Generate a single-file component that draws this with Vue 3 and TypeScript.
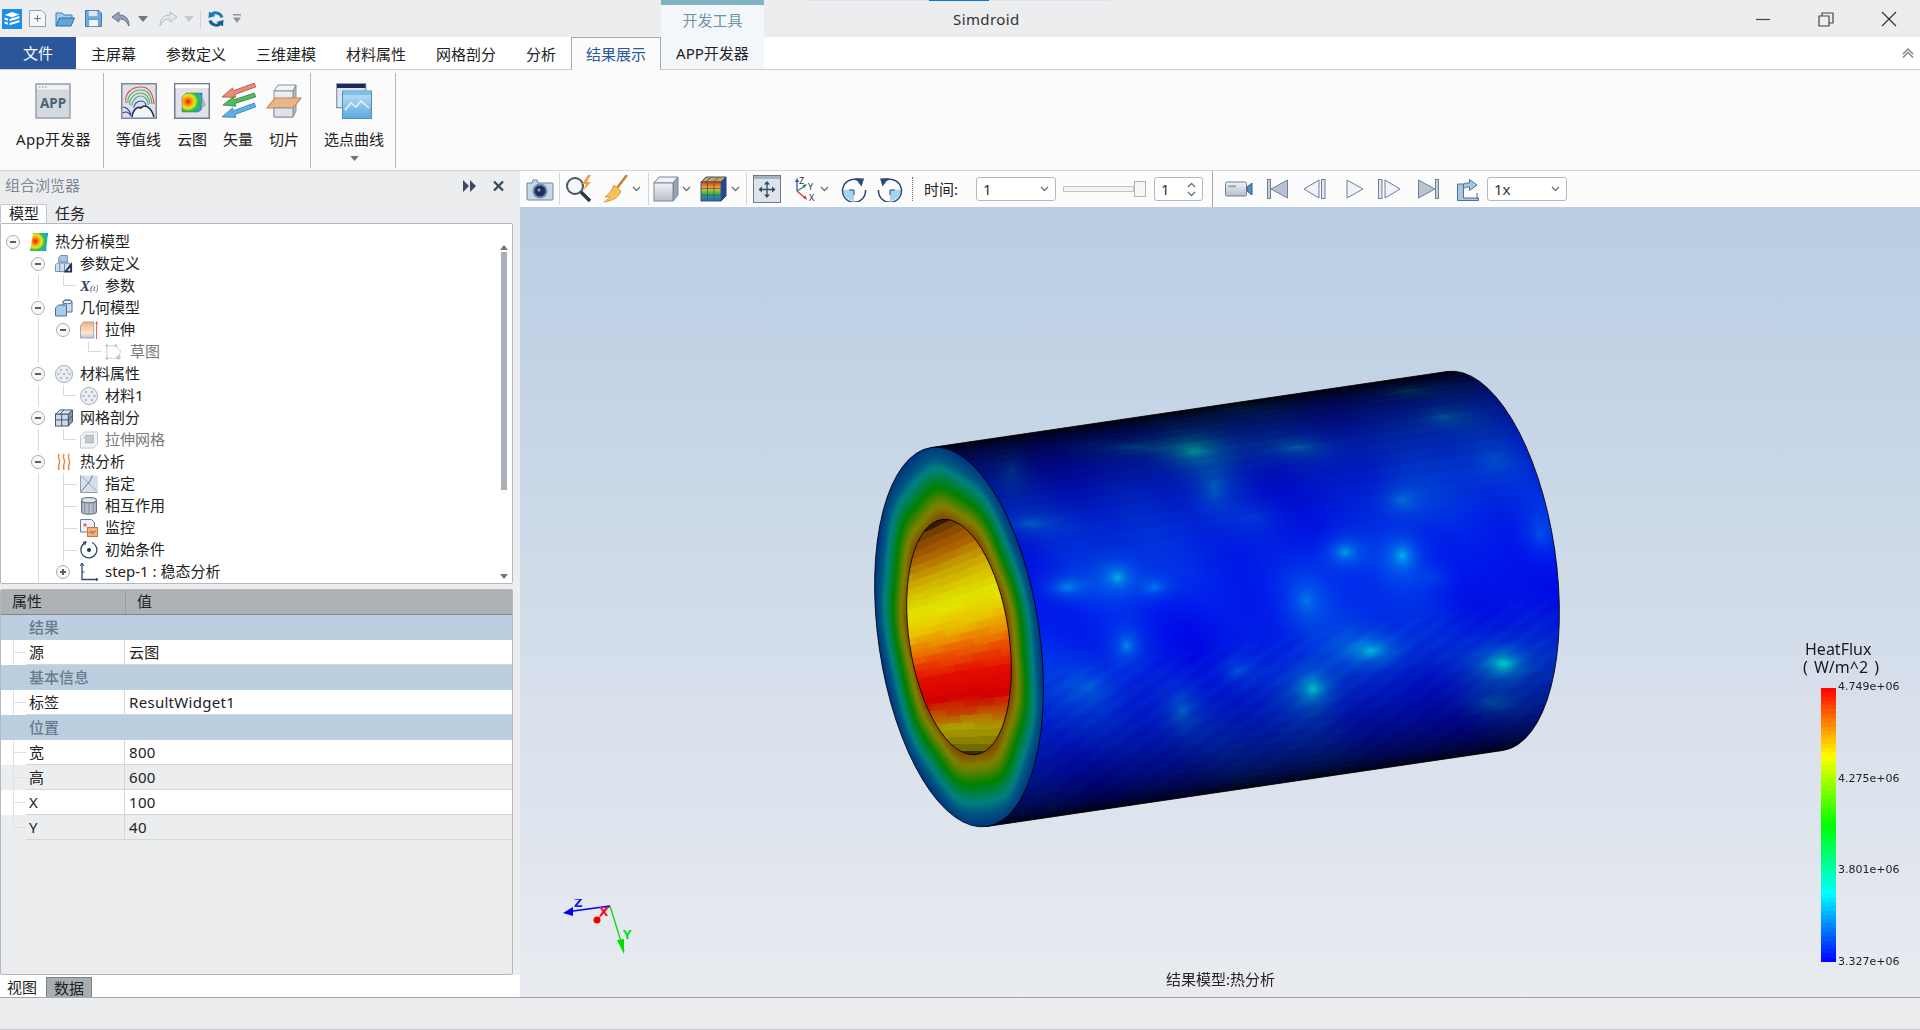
<script setup lang="ts">
import { onMounted, ref } from "vue";

type Rgb = [number, number, number];

interface TreeRow {
  label: string;
  icon: string;
  level: number;
  expander?: "minus" | "plus";
  /** vertical guide of the parent branch */
  guide?: boolean;
  /** connector to this row: elbow for the last child, tee for the others */
  joint?: "elbow" | "tee";
  muted?: boolean;
}

interface PropRow {
  label: string;
  value?: string;
  group?: boolean;
  alt?: boolean;
  last?: boolean;
}

const tabs = ["主屏幕", "参数定义", "三维建模", "材料属性", "网格剖分", "分析"];

const ribbonMiddle = [
  { label: "等值线", icon: "r-contour" },
  { label: "云图", icon: "r-cloud" },
  { label: "矢量", icon: "r-vector" },
  { label: "切片", icon: "r-slice" },
];

const treeRows: TreeRow[] = [
  { label: "热分析模型", icon: "t-heatmap", level: 0, expander: "minus" },
  { label: "参数定义", icon: "t-params", level: 1, expander: "minus" },
  { label: "参数", icon: "t-xt", level: 2, guide: true, joint: "elbow" },
  { label: "几何模型", icon: "t-solids", level: 1, expander: "minus" },
  { label: "拉伸", icon: "t-extrude", level: 2, expander: "minus", guide: true },
  { label: "草图", icon: "t-sketch", level: 3, guide: true, joint: "elbow", muted: true },
  { label: "材料属性", icon: "t-material", level: 1, expander: "minus" },
  { label: "材料1", icon: "t-material", level: 2, guide: true, joint: "elbow" },
  { label: "网格剖分", icon: "t-mesh", level: 1, expander: "minus" },
  { label: "拉伸网格", icon: "t-meshgrey", level: 2, guide: true, joint: "elbow", muted: true },
  { label: "热分析", icon: "t-heat", level: 1, expander: "minus" },
  { label: "指定", icon: "t-assign", level: 2, guide: true, joint: "tee" },
  { label: "相互作用", icon: "t-cyl", level: 2, guide: true, joint: "tee" },
  { label: "监控", icon: "t-monitor", level: 2, guide: true, joint: "tee" },
  { label: "初始条件", icon: "t-init", level: 2, guide: true, joint: "tee" },
  { label: "step-1 : 稳态分析", icon: "t-step", level: 2, expander: "plus", guide: true },
];

const propRows: PropRow[] = [
  { label: "结果", group: true },
  { label: "源", value: "云图" },
  { label: "基本信息", group: true },
  { label: "标签", value: "ResultWidget1" },
  { label: "位置", group: true },
  { label: "宽", value: "800" },
  { label: "高", value: "600", alt: true },
  { label: "X", value: "100" },
  { label: "Y", value: "40", alt: true, last: true },
];

const legendTicks = ["4.749e+06", "4.275e+06", "3.801e+06", "3.327e+06"];

function jet(value: number): Rgb {
  const v = Math.min(1, Math.max(0, value));
  if (v < 0.25) return [0, (255 * v) / 0.25, 255];
  if (v < 0.5) return [0, 255, 255 * (1 - (v - 0.25) / 0.25)];
  if (v < 0.75) return [(255 * (v - 0.5)) / 0.25, 255, 0];
  return [255, 255 * (1 - (v - 0.75) / 0.25), 0];
}

const legendBands = Array.from({ length: 64 }, (_, i) => {
  const [r, g, b] = jet(1 - (i + 0.5) / 64);
  return `rgb(${Math.round(r)},${Math.round(g)},${Math.round(b)})`;
});

// result field of the tube, all in page pixels
const scene = ref<HTMLCanvasElement | null>(null);
const OX = 520;
const OY = 207;
const CX = 959;
const CY = 637;
const AX = 516;
const AY = -76;
const AL = Math.hypot(AX, AY);
const UX = AX / AL;
const UY = AY / AL;
const PX = -UY;
const PY = UX;
const RAD = 191.5;
const MIN = 80.5;
const HOLE = 0.62;

// x, y in zoomed reference units, amplitude, spread
const blobs: number[][] = [
  [1400, 910, 0.2, 34, 32], [985, 985, 0.17, 30, 40], [1110, 870, 0.13, 44, 30],
  [1055, 575, 0.11, 26, 28], [1180, 585, 0.12, 24, 36], [560, 650, 0.11, 24, 30],
  [450, 680, 0.09, 32, 24], [640, 680, 0.07, 24, 22], [580, 855, 0.09, 20, 34],
  [725, 270, 0.15, 42, 30], [700, 1050, 0.07, 26, 50], [820, 930, 0.06, 34, 36],
  [1180, 420, 0.07, 36, 36], [370, 490, 0.06, 46, 22], [770, 380, 0.07, 30, 54],
  [1270, 170, 0.08, 50, 28], [950, 260, 0.08, 56, 22], [1190, 90, 0.11, 44, 14],
  [600, 260, 0.08, 70, 14], [1380, 1030, 0.07, 44, 24], [970, 720, 0.06, 30, 56],
  [1480, 520, 0.05, 30, 56], [800, 140, 0.08, 50, 12], [330, 330, 0.05, 24, 54],
  [1250, 650, 0.03, 40, 36], [860, 470, 0.03, 80, 50], [1380, 300, 0.04, 60, 60],
  [500, 980, 0.05, 50, 50],
].map(([x, y, a, sx, sy]) => [860 + x / 2.178, 360 + y / 3, a * 1.3, (sx / 2.178) * 1.7, (sy / 3) * 1.7]);

function bodyColor(x: number, y: number): Rgb {
  const dx = x - CX;
  const dy = y - CY;
  const w = Math.max(-1, Math.min(1, (dx * PX + dy * PY) / RAD));
  const facet = Math.round(Math.asin(w) / (Math.PI / 40)) * (Math.PI / 40);
  const shade = 0.92 * Math.pow(Math.max(0.02, Math.cos(facet)), 1.1);
  let v = 0.03;
  v += 0.01 * (Math.sin(x * 0.023 + y * 0.013) + Math.sin(y * 0.037 - x * 0.011));
  v += 0.006 * Math.sin(x * 0.061 - y * 0.047);
  if (w > 0.25) v += 0.005 * Math.sin((x + y * 1.4) * 0.24);
  for (const [bx, by, a, sx, sy] of blobs) {
    const ex = (x - bx) / sx;
    const ey = (y - by) / sy;
    const d = ex * ex + ey * ey;
    if (d < 16) v += a * Math.exp(-1.6 * Math.sqrt(d));
  }
  const [r, g, b] = jet(Math.min(v, 0.24));
  return [r * shade, g * shade, b * shade];
}

function ramp(x: number, stops: number[][]): number {
  for (let i = 1; i < stops.length; i++) {
    if (x <= stops[i][0]) {
      const [x0, y0] = stops[i - 1];
      const [x1, y1] = stops[i];
      return y0 + ((y1 - y0) * (x - x0)) / (x1 - x0);
    }
  }
  return stops[stops.length - 1][1];
}

const faceRamp = [[0.6, 0.86], [0.62, 0.85], [0.7, 0.72], [0.78, 0.5], [0.87, 0.27], [0.93, 0.17], [1.05, 0.06]];
const holeRamp = [
  [-1.3, 0.88], [-0.77, 0.86], [-0.6, 0.8], [-0.3, 0.745], [-0.1, 0.8], [0.1, 0.9],
  [0.3, 0.985], [0.5, 1], [0.62, 0.92], [0.76, 0.77], [1.3, 0.76],
];

function faceColor(x: number, y: number): Rgb {
  const dx = x - CX;
  const dy = y - CY;
  const lx = (dx * UX + dy * UY) / MIN;
  const ly = (dx * PX + dy * PY) / RAD;
  const rho = Math.hypot(lx, ly) + 0.01 * Math.sin(9 * Math.atan2(ly, lx));
  const [r, g, b] = jet(ramp(rho, faceRamp));
  return [r * 0.5, g * 0.5, b * 0.5];
}

function holeColor(x: number, y: number): Rgb {
  const dx = x - CX;
  const dy = y - CY;
  const t = (dx * UX + dy * UY) / (MIN * HOLE);
  const w = (dx * PX + dy * PY) / (RAD * HOLE);
  const skew = w + (0.035 - 0.1 * w) * t;
  const band = Math.round(skew * 16) / 16;
  const soft = 0.5 * skew + 0.5 * band;
  const tri = Math.sin(t * 5 + band * 29) > 0 ? 0.01 : -0.01;
  const v = ramp(soft + tri, holeRamp);
  const shade = 0.2 + 0.72 * Math.sqrt(Math.max(0, 1 - band * band));
  const [r, g, b] = jet(v);
  return [r * shade, g * shade, b * shade];
}

function layer(width: number, height: number, color: (x: number, y: number) => Rgb) {
  const c = document.createElement("canvas");
  c.width = width;
  c.height = height;
  const ctx = c.getContext("2d")!;
  const img = ctx.createImageData(width, height);
  for (let y = 150; y < 640; y++) {
    for (let x = 340; x < 1060; x++) {
      const [r, g, b] = color(x + OX, y + OY);
      const i = (y * width + x) * 4;
      img.data[i] = r;
      img.data[i + 1] = g;
      img.data[i + 2] = b;
      img.data[i + 3] = 255;
    }
  }
  ctx.putImageData(img, 0, 0);
  return c;
}

onMounted(() => {
  const canvas = scene.value;
  if (!canvas) return;
  const ctx = canvas.getContext("2d")!;
  const { width, height } = canvas;
  const rot = Math.atan2(UY, UX);
  const cx = CX - OX;
  const cy = CY - OY;
  const bx = cx + AX;
  const by = cy + AY;

  const silhouette = () => {
    ctx.beginPath();
    ctx.moveTo(cx - RAD * PX, cy - RAD * PY);
    ctx.lineTo(bx - RAD * PX, by - RAD * PY);
    ctx.ellipse(bx, by, MIN, RAD, rot, -Math.PI / 2, Math.PI / 2);
    ctx.lineTo(cx + RAD * PX, cy + RAD * PY);
  };
  const ellipsePath = (k: number) => {
    ctx.beginPath();
    ctx.ellipse(cx, cy, MIN * k, RAD * k, rot, 0, Math.PI * 2);
  };
  const fill = (path: () => void, source: HTMLCanvasElement) => {
    ctx.save();
    path();
    ctx.clip();
    ctx.drawImage(source, 0, 0);
    ctx.restore();
  };

  fill(silhouette, layer(width, height, bodyColor));
  fill(() => ellipsePath(1), layer(width, height, faceColor));
  fill(() => ellipsePath(HOLE), layer(width, height, holeColor));

  ctx.strokeStyle = "rgba(0,0,0,0.85)";
  ctx.lineWidth = 1;
  silhouette();
  ctx.stroke();
  ellipsePath(1);
  ctx.stroke();
  ellipsePath(HOLE);
  ctx.stroke();
});
</script>

<template>
  <div class="app">
    <!-- icon sprite -->
    <svg class="sprite" aria-hidden="true">
      <defs>
        <radialGradient id="heat" cx="0.3" cy="0.45" r="0.85">
          <stop offset="0" stop-color="#f01010" />
          <stop offset="0.25" stop-color="#f8a010" />
          <stop offset="0.42" stop-color="#e8e820" />
          <stop offset="0.6" stop-color="#28c040" />
          <stop offset="0.8" stop-color="#18b0e0" />
          <stop offset="1" stop-color="#1848d0" />
        </radialGradient>
        <linearGradient id="steel" x1="0" y1="0" x2="0" y2="1">
          <stop offset="0" stop-color="#f1f3f6" />
          <stop offset="1" stop-color="#b8bfca" />
        </linearGradient>
        <linearGradient id="sky" x1="0" y1="0" x2="0" y2="1">
          <stop offset="0" stop-color="#c5e0f4" />
          <stop offset="1" stop-color="#5aa9de" />
        </linearGradient>
        <linearGradient id="amber" x1="0" y1="0" x2="0" y2="1">
          <stop offset="0" stop-color="#f4b27a" />
          <stop offset="0.7" stop-color="#fbe6d3" />
          <stop offset="1" stop-color="#b9c3d2" />
        </linearGradient>
        <linearGradient id="rainbow" x1="0" y1="0" x2="0" y2="1">
          <stop offset="0" stop-color="#e83020" />
          <stop offset="0.35" stop-color="#f0c020" />
          <stop offset="0.65" stop-color="#30b050" />
          <stop offset="1" stop-color="#2060d8" />
        </linearGradient>
      </defs>

      <!-- quick access -->
      <symbol id="q-logo" viewBox="0 0 20 20">
        <rect width="20" height="20" fill="#1b8ee8" />
        <path d="M2.5 6 10 3l7.5 2.4L10 8.2z M2.5 8.4l3.4 1.2v2.2L2.5 10.6z M2.5 12.4l3.4 1.2v2.2L2.5 14.600z" fill="#fff" />
        <path d="M7.500 10 17.500 7v2.200L7.500 12.200z M7.500 14l10-3v2.200l-10 3z" fill="#fff" />
      </symbol>
      <symbol id="q-new" viewBox="0 0 18 18">
        <path d="M.5.5h13l4 4v13H.500z" fill="#f6f7f9" stroke="#8c99aa" />
        <path d="M9 5.500v7M5.500 9h7" stroke="#5c6b7d" fill="none" />
      </symbol>
      <symbol id="q-open" viewBox="0 0 20 16">
        <path d="M1 15V2h6l2 2h8v3" fill="#a8c9e6" stroke="#3d7fb5" />
        <path d="M1 15l3.500-8H19.500L16 15z" fill="#5fa8dc" stroke="#2c6fa5" />
      </symbol>
      <symbol id="q-save" viewBox="0 0 18 18">
        <path d="M.5.5h14l3 3v14H.500z" fill="#6fa8dc" stroke="#3f74a6" />
        <rect x="4" y="1" width="9" height="5.500" fill="#dce9f4" />
        <rect x="3.500" y="10" width="11" height="7.500" fill="#eef3f8" stroke="#3f74a6" stroke-width="0.600" />
      </symbol>
      <symbol id="q-undo" viewBox="0 0 20 16">
        <path d="M8 1 1 6l7 5V8c4 0 7 1 10 7 0-7-3-11-10-11z" fill="#93a2b5" stroke="#63738a" />
      </symbol>
      <symbol id="q-redo" viewBox="0 0 20 16">
        <path d="M12 1l7 5-7 5V8C8 8 5 9 2 15c0-7 3-11 10-11z" fill="#e3e6ea" stroke="#b4bcc6" />
      </symbol>
      <symbol id="tri" viewBox="0 0 10 6"><path d="M0 0h10L5 6z" fill="currentColor" /></symbol>
      <symbol id="q-refresh" viewBox="0 0 16 18">
        <path d="M14 7.500A6.500 6.500 0 0 0 3.500 4.500" fill="none" stroke="#1d78b8" stroke-width="3" />
        <path d="M2 10.500A6.500 6.500 0 0 0 12.500 13.500" fill="none" stroke="#155f94" stroke-width="3" />
        <path d="M.5 8 1 1.500 7.500 6z" fill="#1d78b8" />
        <path d="M15.500 10 15 16.500 8.500 12z" fill="#155f94" />
      </symbol>
      <symbol id="q-custom" viewBox="0 0 8 9">
        <path d="M0 0h8v1.500H0z M0 3.500h8L4 9z" fill="#8f959d" />
      </symbol>

      <!-- ribbon -->
      <symbol id="r-app" viewBox="0 0 36 36">
        <rect x="1" y="1" width="34" height="34" fill="#d4d8df" stroke="#9aa1ab" stroke-width="1.500" />
        <rect x="2" y="2" width="32" height="4.500" fill="#eff1f4" />
        <path d="M4 4h1.500M7 4h1.500M10 4h1.500" stroke="#7f8894" />
        <text x="18" y="25" font-size="13.500" font-weight="700" fill="#4c6279" text-anchor="middle" font-family="Noto Sans, sans-serif">APP</text>
      </symbol>
      <symbol id="r-contour" viewBox="0 0 36 36">
        <rect x=".75" y=".75" width="34.500" height="34.500" fill="#dde1e7" stroke="#7d8898" stroke-width="1.500" />
        <g fill="none" stroke-width="1.100">
          <path d="M5 20C3 10 11 4 20 4c8 0 12 6 13 17" stroke="#d8504e" />
          <path d="M7 20C6 13 12 7 20 7c6 0 10 5 11 14M9 22c-1-6 4-12 11-12 6 0 8 5 9 11" stroke="#58ab62" />
          <path d="M11 23c0-5 4-10 9-10 4 0 7 4 7 9" stroke="#4bb07a" />
          <path d="M13 25c0-4 3-7 7-7s5 3 5 6" stroke="#3a4fc0" />
          <path d="M2 24c3 0 6 3 8 7M2 30c3-2 6-1 8 3" stroke="#2b38b0" />
        </g>
        <path d="M11 34c1-8 6-11 9-9 3-4 10-2 13 9" fill="#f3f4f6" stroke="#1d2a4c" stroke-width="1.600" />
      </symbol>
      <symbol id="r-cloud" viewBox="0 0 36 36">
        <rect x=".75" y=".75" width="34.500" height="34.500" fill="#dfe3e9" stroke="#6f7c90" stroke-width="1.500" />
        <rect x="1.500" y="1.500" width="33" height="3.500" fill="#fff" />
        <path d="M25 28l7-6-4-10z" fill="#aeb4be" />
        <path d="M8 14 12 10h16l-1 17-3 2H8z" fill="url(#heat)" stroke="#7a5a20" stroke-width="0.500" />
      </symbol>
      <symbol id="r-vector" viewBox="0 0 36 36">
        <path d="M2 14 12.500 4.900l1 2.800L34.300.1l1.400 3.800-20.800 7.600 1 2.800z" fill="#f08a78" stroke="#8a4a3c" stroke-width="0.700" />
        <path d="M3 22 13 13.900l1 2.800 20.300-6.600 1.400 3.800-20.800 6.600 1 2.800z" fill="#4fbf5e" stroke="#2a6a34" stroke-width="0.700" />
        <path d="M2 34 12.500 24.900l1 2.800 20.800-7.600 1.400 3.800-20.800 7.600 1 2.800z" fill="#5cb2ea" stroke="#2a6a9c" stroke-width="0.700" />
      </symbol>
      <symbol id="r-slice" viewBox="0 0 36 36">
        <path d="M8 8l4-6h18l-3 6z" fill="#f3f4f6" stroke="#8a92a0" />
        <path d="M27 8l3-6v26l-3 6z" fill="#b4bbc6" stroke="#8a92a0" />
        <rect x="8" y="8" width="19" height="26" fill="url(#steel)" stroke="#8a92a0" />
        <path d="M1 25 9 15h26l-8 10z" fill="#eab58a" stroke="#c98552" stroke-width="1.200" />
        <path d="M8 25h19v9H8z" fill="#dfe2e8" stroke="#8a92a0" />
      </symbol>
      <symbol id="r-curve" viewBox="0 0 36 36">
        <rect x=".75" y=".75" width="29" height="24" fill="#dce6f0" stroke="#6f8096" />
        <rect x="1" y="1" width="28.500" height="4" fill="#1e2a55" />
        <rect x="6.500" y="8" width="29" height="27.500" fill="url(#sky)" stroke="#4a90c6" />
        <rect x="7" y="8.500" width="28" height="3.500" fill="#7cc0ea" />
        <path d="M9 27l6-7 5 4 5-6 8 7" fill="none" stroke="#e8f5fd" stroke-width="1.500" />
      </symbol>

      <!-- viewport toolbar -->
      <symbol id="v-camera" viewBox="0 0 28 24">
        <path d="M1 6h5l1-3h4l1 3h14a1 1 0 0 1 1 1v15a1 1 0 0 1-1 1H2a1 1 0 0 1-1-1z" fill="#c9d6e6" stroke="#6d83a0" />
        <circle cx="14" cy="14" r="7.500" fill="#6b8bb0" />
        <circle cx="14" cy="14" r="5.500" fill="#1e2f5c" />
        <circle cx="13" cy="13" r="1.500" fill="#8ea6cc" />
      </symbol>
      <symbol id="v-zoom" viewBox="0 0 29 28">
        <circle cx="10" cy="11" r="8" fill="#f4f7fa" stroke="#4b5560" stroke-width="2" />
        <path d="M16 17l9 9" stroke="#2e3640" stroke-width="3.500" />
        <path d="M23 0l-6 9h4l-3 7 8-9h-4l4-7z" fill="#f0a040" />
      </symbol>
      <symbol id="v-broom" viewBox="0 0 26 28">
        <path d="M25 0 15 13" stroke="#c48438" stroke-width="2.500" />
        <path d="M12 10l7 6c-2 6-8 10-17 11 4-3 6-5 6-6-2 1-3 1-5 1 4-3 7-7 9-12z" fill="#f3c257" stroke="#cc9330" stroke-width="0.800" />
      </symbol>
      <symbol id="chev" viewBox="0 0 9 6"><path d="M1 1l3.500 3.500L8 1" fill="none" stroke="#66717f" stroke-width="1.300" /></symbol>
      <symbol id="v-cube" viewBox="0 0 26 26">
        <path d="M1 7l5-6h19l-5 6z" fill="#f0f2f5" stroke="#7d8795" />
        <path d="M20 7l5-6v18l-5 6z" fill="#98a2b0" stroke="#7d8795" />
        <rect x="1" y="7" width="19" height="18" fill="url(#steel)" stroke="#7d8795" />
      </symbol>
      <symbol id="v-colorcube" viewBox="0 0 27 26">
        <path d="M1 6l5-5h20l-5 5z" fill="#cfa050" stroke="#38557c" />
        <path d="M21 6l5-5v19l-5 5z" fill="#1c4a8c" stroke="#24406c" />
        <rect x="1" y="6" width="20" height="19" fill="url(#rainbow)" stroke="#38557c" />
        <path d="M7.500 6v19M14 6v19M1 12.500h20M1 19h20M11 1l-5 5M18.500 1l-5 5M21 12l5-5M21 18.500l5-5" stroke="#38557c" stroke-width="0.800" fill="none" />
      </symbol>
      <symbol id="v-fit" viewBox="0 0 28 28">
        <rect x=".5" y=".5" width="27" height="27" fill="#dfe4ea" stroke="#6c7b90" />
        <rect x="1" y="1" width="26" height="3" fill="#a7b2c0" />
        <path d="M14 7v15M6.500 14.500h15" stroke="#2c4a6e" stroke-width="1.300" />
        <path d="M14 6l-3 3.500h6z M14 23l-3-3.500h6z M5.500 14.500 9 11.500v6z M22.500 14.500 19 11.500v6z" fill="#2c4a6e" />
      </symbol>
      <symbol id="v-axes" viewBox="0 0 24 26">
        <path d="M3 15V4" stroke="#2050c0" stroke-width="1.200" />
        <path d="M3 2 1 6h4z" fill="#2050c0" />
        <path d="M3 15l8-5" stroke="#209048" stroke-width="1.200" />
        <path d="M13 8l-4.500 1 2 3z" fill="#209048" />
        <path d="M3 15l8 7" stroke="#d83030" stroke-width="1.200" />
        <path d="M13 24l-1.500-4.500-2.500 2z" fill="#d83030" />
        <g font-size="9" fill="#333" font-family="Noto Sans, sans-serif">
          <text x="5" y="8">Z</text>
          <text x="14" y="14">Y</text>
          <text x="15" y="25">X</text>
        </g>
      </symbol>
      <symbol id="v-rotcw" viewBox="0 0 26 25">
        <path d="M13 12.500V24A11.500 11.500 0 0 1 2 13z" fill="#a6d3f0" />
        <path d="M19 4A11.500 11.500 0 1 0 24.500 13" fill="none" stroke="#2d4a70" stroke-width="1.500" />
        <path d="M14 1l9 .5-2.500 8z" fill="#2d4a70" />
        <path d="M13 13H8M13 13v5" stroke="#2d4a70" />
      </symbol>
      <symbol id="v-rotccw" viewBox="0 0 26 25">
        <path d="M13 12.500V24A11.500 11.500 0 0 0 24 13z" fill="#a6d3f0" />
        <path d="M7 4A11.500 11.500 0 1 1 1.500 13" fill="none" stroke="#2d4a70" stroke-width="1.500" />
        <path d="M12 1l-9 .5 2.500 8z" fill="#2d4a70" />
        <path d="M13 13h5M13 13v5" stroke="#2d4a70" />
      </symbol>
      <symbol id="v-video" viewBox="0 0 28 16">
        <rect x=".5" y="1" width="21" height="14" rx="1.500" fill="url(#steel)" stroke="#6d7f98" />
        <rect x="3" y="4" width="8" height="2.500" fill="#a5aebb" />
        <path d="M22 6l5-4v12l-5-4z" fill="#4f8fc4" stroke="#3a5f88" />
      </symbol>
      <symbol id="v-first" viewBox="0 0 21 20">
        <rect x=".5" y=".5" width="3" height="19" fill="#c4cfdc" stroke="#6d7f9c" />
        <path d="M20.500 1v18L4 10z" fill="#b9c3d0" stroke="#6d7f9c" />
      </symbol>
      <symbol id="v-prev" viewBox="0 0 23 20">
        <path d="M16 1v18L1 10z" fill="#eff2f6" stroke="#6d7f9c" />
        <rect x="18.500" y=".5" width="3.500" height="19" fill="#e3e8ee" stroke="#6d7f9c" />
      </symbol>
      <symbol id="v-play" viewBox="0 0 18 20">
        <path d="M1 1v18l16-9z" fill="#eff2f6" stroke="#6d7f9c" />
      </symbol>
      <symbol id="v-next" viewBox="0 0 23 20">
        <rect x=".5" y=".5" width="3.500" height="19" fill="#e3e8ee" stroke="#6d7f9c" />
        <path d="M7 1v18l15-9z" fill="#eff2f6" stroke="#6d7f9c" />
      </symbol>
      <symbol id="v-last" viewBox="0 0 21 20">
        <path d="M.5 1v18L17 10z" fill="#b9c3d0" stroke="#6d7f9c" />
        <rect x="17.500" y=".5" width="3" height="19" fill="#c4cfdc" stroke="#6d7f9c" />
      </symbol>
      <symbol id="v-export" viewBox="0 0 24 24">
        <path d="M1.500 7h6v14h15v2.500H1.500z" fill="#a9c7e4" stroke="#4f6f96" />
        <path d="M21 16v6M7.500 7c2-1 4-1 6-1V2.500L21 8l-7.500 5.500V10c-3 0-5 0-6 2z" fill="#a9c7e4" stroke="#4f6f96" />
      </symbol>

      <!-- tree -->
      <symbol id="t-heatmap" viewBox="0 0 18 18">
        <path d="M3 0h15l-2 18H0z" fill="url(#heat)" />
      </symbol>
      <symbol id="t-params" viewBox="0 0 19 18">
        <path d="M4 2l2-2h7v7H4z" fill="#a9c7e4" stroke="#4b6f96" stroke-width="0.800" />
        <path d="M.5 10l2-2h13v9H.500z" fill="#cfe0f0" stroke="#4b6f96" stroke-width="0.800" />
        <path d="M5 9v8M10 9v8" stroke="#4b6f96" stroke-width="0.800" />
        <path d="M18 7v11h-9z" fill="#1f3558" />
        <path d="M16 13v3h-3z" fill="#fff" />
      </symbol>
      <symbol id="t-xt" viewBox="0 0 19 18">
        <text x="0" y="14" font-family="Liberation Serif, serif" font-style="italic" font-size="16" font-weight="700" fill="#33455f">X</text>
        <text x="10.500" y="14" font-family="Liberation Serif, serif" font-style="italic" font-size="9.500" fill="#33455f">(t)</text>
      </symbol>
      <symbol id="t-solids" viewBox="0 0 18 18">
        <path d="M8 3c0-3 9-3 9 0v10h-9z" fill="#cfdff0" stroke="#4b6f96" />
        <ellipse cx="12.500" cy="3" rx="4.500" ry="1.800" fill="#e6f0f8" stroke="#4b6f96" />
        <path d="M.5 9l3-3h8v11H.500z" fill="#a9cbea" stroke="#4b6f96" />
      </symbol>
      <symbol id="t-extrude" viewBox="0 0 19 19">
        <path d="M.5 5l3-4h11v17H.500z" fill="url(#amber)" stroke="#8897ad" stroke-width="0.800" />
        <path d="M17.500 19V2" stroke="#e05050" />
        <path d="M17.500 0l-1.500 3h3z" fill="#e05050" />
      </symbol>
      <symbol id="t-sketch" viewBox="0 0 20 18">
        <path d="M2 2h10l5 6c0 2-1 6-3 8H2z" fill="none" stroke="#b8bcc2" stroke-dasharray="3 1" />
        <path d="M1 1h2v2H1z M11 1h2v2h-2z M1 15h2v2H1z" fill="#d0d3d8" stroke="#a6abb2" stroke-width="0.500" />
        <circle cx="15" cy="15" r="2.500" fill="#c3c7cc" />
      </symbol>
      <symbol id="t-material" viewBox="0 0 18 18">
        <circle cx="9" cy="9" r="8.500" fill="#eceff3" stroke="#a4adb9" />
        <g fill="#b4bdc9">
          <circle cx="6" cy="5" r="1.300" /><circle cx="12" cy="5" r="1.300" /><circle cx="3.500" cy="9" r="1.300" /><circle cx="9" cy="9" r="1.300" /><circle cx="14.500" cy="9" r="1.300" /><circle cx="6" cy="13" r="1.300" /><circle cx="12" cy="13" r="1.300" />
        </g>
      </symbol>
      <symbol id="t-mesh" viewBox="0 0 19 18">
        <path d="M.5 5 5 .5h13.500L14 5z" fill="#dfe4ea" stroke="#3f506a" />
        <path d="M14 5 18.500.5V13L14 17.500z" fill="#8695aa" stroke="#3f506a" />
        <rect x=".5" y="5" width="13.500" height="12.500" fill="#cfdbe8" stroke="#3f506a" />
        <path d="M7 5v12.500M.5 11h13.500M9.500.5 5 5M14 11l4.500-4.500" stroke="#3f506a" fill="none" />
      </symbol>
      <symbol id="t-meshgrey" viewBox="0 0 19 18">
        <path d="M.5 5 5 .5h13.500v12.500L14 17.500H.500z" fill="#f2f3f5" stroke="#bfc3c9" />
        <rect x="6" y="4" width="8" height="8" fill="#c6cad0" stroke="#a9aeb6" />
        <path d="M3 8l3-4" stroke="#c6cad0" />
      </symbol>
      <symbol id="t-heat" viewBox="0 0 16 18">
        <path d="M3 1c-2.500 4 2.500 6 0 10-.5 2-1 4 0 6M8 1c-2.500 4 2.500 6 0 10-.5 2-1 4 0 6M13 1c-2.500 4 2.500 6 0 10-.5 2-1 4 0 6" fill="none" stroke="#e88a40" stroke-width="1.500" />
      </symbol>
      <symbol id="t-assign" viewBox="0 0 19 18">
        <rect width="19" height="18" fill="#d9dfe7" />
        <path d="M.5 0v18h18" fill="none" stroke="#8896a8" />
        <path d="M2 1l15 15" stroke="#8fa0b6" />
        <path d="M1 17C5 12 12 6 13 0" fill="none" stroke="#2c78b8" />
      </symbol>
      <symbol id="t-cyl" viewBox="0 0 16 17">
        <path d="M1 3v11c0 3 14 3 14 0V3z" fill="#b4bdc8" stroke="#5d6c7e" />
        <ellipse cx="8" cy="3" rx="7" ry="2.500" fill="#dfe4ea" stroke="#5d6c7e" />
        <path d="M4 5v10M8 6v10M12 5v10" stroke="#6f7d8f" stroke-width="0.700" />
      </symbol>
      <symbol id="t-monitor" viewBox="0 0 18 18">
        <path d="M.5.5h11l3 3V13H.500z" fill="#eef1f5" stroke="#6f7f92" />
        <path d="M5 4v4M3 6h4" stroke="#d05040" />
        <rect x="7.500" y="8.500" width="10" height="9" fill="#f2b080" stroke="#c97840" />
        <path d="M9 14l2-2 1.500 3 1.500-3 2 1" fill="none" stroke="#8c4c20" stroke-width="0.700" />
      </symbol>
      <symbol id="t-init" viewBox="0 0 18 18">
        <path d="M12 1.500A8 8 0 1 1 4 2.500" fill="none" stroke="#2d4a70" stroke-width="1.300" />
        <path d="M7 0 2.500 1l2.500 3.500z" fill="#2d4a70" />
        <circle cx="9" cy="9" r="2" fill="#1f3558" />
      </symbol>
      <symbol id="t-step" viewBox="0 0 18 18">
        <path d="M2 0v16.500h16" fill="none" stroke="#2d4a70" stroke-width="1.300" />
        <path d="M0 3l2-3 2 3M16 15l2 1.500-2 1.500" fill="none" stroke="#2d4a70" />
        <path d="M1.500 9h3" stroke="#2d4a70" />
      </symbol>
    </svg>

    <!-- title bar -->
    <header class="titlebar">
      <div class="quick">
        <svg class="q q-20"><use href="#q-logo" /></svg>
        <svg class="q q-17"><use href="#q-new" /></svg>
        <svg class="q q-20"><use href="#q-open" /></svg>
        <svg class="q q-17"><use href="#q-save" /></svg>
        <svg class="q q-20"><use href="#q-undo" /></svg>
        <svg class="q q-tri"><use href="#tri" /></svg>
        <svg class="q q-20"><use href="#q-redo" /></svg>
        <svg class="q q-tri q-off"><use href="#tri" /></svg>
        <span class="q-sep"></span>
        <svg class="q q-16"><use href="#q-refresh" /></svg>
        <svg class="q q-8"><use href="#q-custom" /></svg>
      </div>
      <div class="context-tab">开发工具</div>
      <div class="title">Simdroid</div>
      <div class="title-strip"><i></i></div>
      <div class="win">
        <span class="win-btn">
          <svg viewBox="0 0 16 16"><path d="M1 8.500h14" stroke="#444" stroke-width="1.200" /></svg>
        </span>
        <span class="win-btn">
          <svg viewBox="0 0 16 16"><path d="M1 5h10v10H1z M4 5V2h11v10h-4" fill="none" stroke="#444" stroke-width="1.200" /></svg>
        </span>
        <span class="win-btn">
          <svg viewBox="0 0 16 16"><path d="M1 1l14 14M15 1 1 15" stroke="#333" stroke-width="1.200" /></svg>
        </span>
      </div>
    </header>

    <!-- ribbon tabs -->
    <nav class="tabs">
      <div class="tab-file">文件</div>
      <div v-for="t in tabs" :key="t" class="tab">{{ t }}</div>
      <div class="tab tab--active">结果展示</div>
      <div class="tab tab--context">APP开发器</div>
      <svg class="collapse" viewBox="0 0 12 10">
        <path d="M1 6l5-5 5 5M1 9.500l5-5 5 5" fill="none" stroke="#7a828c" stroke-width="1.400" />
      </svg>
    </nav>

    <!-- ribbon -->
    <section class="ribbon">
      <div class="group group--app">
        <div class="rbtn">
          <svg class="ricon"><use href="#r-app" /></svg>
          <span class="rbtn-wide">App开发器</span>
        </div>
      </div>
      <div class="group group--mid">
        <div v-for="b in ribbonMiddle" :key="b.label" class="rbtn">
          <svg class="ricon"><use :href="'#' + b.icon" /></svg>
          <span>{{ b.label }}</span>
        </div>
      </div>
      <div class="group group--curve">
        <div class="rbtn">
          <svg class="ricon"><use href="#r-curve" /></svg>
          <span>选点曲线</span>
          <svg class="rtri"><use href="#tri" /></svg>
        </div>
      </div>
    </section>

    <main class="main">
      <!-- left side -->
      <aside class="side">
        <div class="side-head">
          <span class="side-title">组合浏览器</span>
          <svg class="side-btn side-btn--float" viewBox="0 0 13 12"><path d="M0 0l6 6-6 6z M7 0l6 6-6 6z" fill="#3c4a5e" /></svg>
          <svg class="side-btn" viewBox="0 0 12 12"><path d="M1.500 1.500l9 9M10.500 1.500l-9 9" stroke="#3c4a5e" stroke-width="2.400" /></svg>
        </div>
        <div class="side-tabs">
          <span class="side-tab side-tab--on">模型</span>
          <span class="side-tab">任务</span>
        </div>

        <div class="tree-box">
          <div class="tree">
            <div
              v-for="r in treeRows"
              :key="r.label + r.level + r.icon"
              class="row"
              :class="[`lv-${r.level}`, { 'row--muted': r.muted }]"
            >
              <i v-if="r.guide" class="guide"></i>
              <i v-if="r.joint" class="joint" :class="`joint--${r.joint} joint-lv-${r.level}`"></i>
              <span class="exp" :class="{ 'exp--on': r.expander, 'exp--plus': r.expander === 'plus' }"></span>
              <svg class="ticon"><use :href="'#' + r.icon" /></svg>
              <span class="row-label">{{ r.label }}</span>
            </div>
          </div>
          <div class="vscroll">
            <svg class="vtri vtri--up"><use href="#tri" /></svg>
            <div class="vthumb"></div>
            <svg class="vtri vtri--down"><use href="#tri" /></svg>
          </div>
        </div>

        <div class="props">
          <div class="props-head">
            <span>属性</span>
            <span>值</span>
          </div>
          <div
            v-for="p in propRows"
            :key="p.label"
            class="prop"
            :class="{ 'prop--group': p.group, 'prop--alt': p.alt, 'prop--last': p.last }"
          >
            <template v-if="p.group">
              <span class="prop-group">{{ p.label }}</span>
            </template>
            <template v-else>
              <span class="prop-gutter"></span>
              <span class="prop-key">{{ p.label }}</span>
              <span class="prop-val">{{ p.value }}</span>
            </template>
          </div>
        </div>

        <div class="bottom-tabs">
          <span class="btab">视图</span>
          <span class="btab btab--on">数据</span>
        </div>
      </aside>

      <!-- 3D view -->
      <section class="view-col">
        <div class="toolbar">
          <svg class="ti ti-camera"><use href="#v-camera" /></svg>
          <span class="tsep"></span>
          <svg class="ti ti-zoom"><use href="#v-zoom" /></svg>
          <svg class="ti ti-broom"><use href="#v-broom" /></svg>
          <svg class="tchev"><use href="#chev" /></svg>
          <span class="tsep"></span>
          <svg class="ti ti-cube"><use href="#v-cube" /></svg>
          <svg class="tchev"><use href="#chev" /></svg>
          <svg class="ti ti-ccube"><use href="#v-colorcube" /></svg>
          <svg class="tchev"><use href="#chev" /></svg>
          <span class="tsep"></span>
          <svg class="ti ti-fit"><use href="#v-fit" /></svg>
          <svg class="ti ti-axes"><use href="#v-axes" /></svg>
          <svg class="tchev"><use href="#chev" /></svg>
          <svg class="ti ti-rot"><use href="#v-rotcw" /></svg>
          <svg class="ti ti-rot"><use href="#v-rotccw" /></svg>
          <span class="tdots"></span>
          <span class="tlabel">时间:</span>
          <div class="combo"><span>1</span><svg class="tchev"><use href="#chev" /></svg></div>
          <div class="slider"><span class="slider-track"></span><span class="slider-handle"></span></div>
          <div class="spin">
            <span>1</span>
            <span class="spin-arrows">
              <svg class="tchev tchev--up"><use href="#chev" /></svg>
              <svg class="tchev"><use href="#chev" /></svg>
            </span>
          </div>
          <span></span>
          <span class="tsep tsep--dark"></span>
          <svg class="ti ti-video"><use href="#v-video" /></svg>
          <svg class="ti ti-first"><use href="#v-first" /></svg>
          <svg class="ti ti-step"><use href="#v-prev" /></svg>
          <svg class="ti ti-play"><use href="#v-play" /></svg>
          <svg class="ti ti-step"><use href="#v-next" /></svg>
          <svg class="ti ti-first"><use href="#v-last" /></svg>
          <svg class="ti ti-export"><use href="#v-export" /></svg>
          <div class="combo"><span>1x</span><svg class="tchev"><use href="#chev" /></svg></div>
        </div>

        <div class="view">
          <canvas ref="scene" class="scene" width="1400" height="790"></canvas>

          <svg class="triad" viewBox="0 0 80 70">
            <path d="M50 7 6 13" stroke="#0000f0" stroke-width="1.300" />
            <path d="M3 14l10-6v9z" fill="#0000f0" />
            <path d="M50 7 64 52" stroke="#00e000" stroke-width="1.300" />
            <path d="M64 55l-7-14 7-1z" fill="#00e000" />
            <path d="M50 7 37 21" stroke="#f00000" stroke-width="1" />
            <circle cx="37" cy="21" r="3.500" fill="#f00000" />
            <text x="14" y="8" class="triad-z">Z</text>
            <text x="39" y="17" class="triad-x">X</text>
            <text x="63" y="40" class="triad-y">Y</text>
          </svg>

          <div class="legend">
            <div class="legend-title">HeatFlux<br /><span class="legend-unit">( W/m^2 )</span></div>
            <div class="legend-body">
              <div class="legend-bar">
                <i v-for="(c, i) in legendBands" :key="i" :style="{ background: c }"></i>
              </div>
              <div class="legend-ticks">
                <span v-for="t in legendTicks" :key="t">{{ t }}</span>
              </div>
            </div>
          </div>

          <div class="caption">结果模型:热分析</div>
        </div>
      </section>
    </main>

    <footer class="status"></footer>
  </div>
</template>

<style>
html,
body {
  margin: 0;
  overflow: hidden;
  background: #ecedef;
}
</style>

<style scoped>
.app {
  width: 1920px;
  height: 1030px;
  display: flex;
  flex-direction: column;
  background: #ecedef;
  color: #222;
  font-family: "Noto Sans", "Noto Sans CJK SC", sans-serif;
  font-size: 15px;
  line-height: 1.2;
  overflow: hidden;
}

.sprite {
  position: absolute;
  width: 0;
  height: 0;
}

/* title bar */
.titlebar {
  position: relative;
  height: 37px;
  display: flex;
  flex: none;
}

.title-strip {
  position: absolute;
  left: 808px;
  top: 0;
  width: 302px;
  height: 1px;
  background: #dfe3e8;
}

.title-strip i {
  display: block;
  width: 60px;
  height: 1px;
  margin-left: 121px;
  background: #0078d7;
}

.quick {
  width: 661px;
  display: grid;
  grid-template-columns: 27px 26px 30px 26px 27px 20px 26px 16px 8px 25px 10px;
  align-items: center;
  justify-items: start;
  padding-left: 2px;
  box-sizing: border-box;
  align-content: center;
}

.q-20 {
  width: 20px;
  height: 20px;
}

.q-17 {
  width: 17px;
  height: 17px;
}

.q-16 {
  width: 16px;
  height: 18px;
}

.q-8 {
  width: 8px;
  height: 9px;
}

.q-tri {
  width: 10px;
  height: 6px;
  color: #6d7683;
}

.q-off {
  color: #c5c9cf;
}

.q-sep {
  width: 1px;
  height: 18px;
  background: #d0d3d7;
}

.context-tab {
  width: 103px;
  flex: none;
  box-sizing: border-box;
  border-top: 5px solid #7fb3c4;
  background: #f3f7fb;
  color: #6f939f;
  text-align: center;
  padding-top: 6px;
}

.title {
  padding: 10px 0 0 189px;
  color: #333;
  letter-spacing: 0.4px;
}

.win {
  margin-left: auto;
  display: flex;
}

.win-btn {
  width: 63px;
  display: flex;
  align-items: center;
  justify-content: center;
}

.win-btn svg {
  width: 16px;
  height: 16px;
}

/* tabs */
.tabs {
  height: 33px;
  flex: none;
  display: flex;
  align-items: stretch;
  background: #fff;
  box-shadow: inset 0 -1px 0 #cfcfcf;
}

.tab-file {
  width: 76px;
  background: #2b579a;
  color: #fff;
  display: flex;
  align-items: center;
  justify-content: center;
  margin-bottom: 1px;
}

.tab {
  padding: 0 15px;
  display: flex;
  align-items: center;
}

.tab--active {
  color: #2b579a;
  background: #fbfbfb;
  border: 1px solid #a8a8a8;
  border-bottom: none;
  padding: 0 14px;
}

.tab--context {
  background: #f3f7fb;
  margin-bottom: 1px;
}

.collapse {
  width: 12px;
  height: 10px;
  margin: 11px 6px 0 auto;
}

/* ribbon */
.ribbon {
  height: 101px;
  flex: none;
  box-sizing: border-box;
  display: flex;
  background: #fbfbfb;
  border-bottom: 1px solid #d4d4d4;
  padding: 3px 0 2px;
}

.group {
  display: flex;
  border-right: 1px solid #b9b9b9;
  box-sizing: border-box;
}

.group--app {
  width: 104px;
  padding-left: 16px;
}

.group--mid {
  width: 207px;
  padding-left: 12px;
  gap: 10px;
}

.group--mid .rbtn:first-child {
  margin-right: 3px;
}

.group--curve {
  width: 85px;
  padding-left: 13px;
}

.rbtn {
  display: flex;
  flex-direction: column;
  align-items: center;
  padding-top: 10px;
  white-space: nowrap;
}

.rbtn-wide {
  letter-spacing: 0.3px;
}

.ricon {
  width: 36px;
  height: 36px;
  margin-bottom: 11px;
}

.rtri {
  width: 9px;
  height: 5px;
  margin-top: 8px;
  color: #6a727c;
}

/* main */
.main {
  flex: 1;
  display: flex;
  min-height: 0;
}

.side {
  width: 520px;
  flex: none;
  display: flex;
  flex-direction: column;
}

.side-head {
  height: 33px;
  flex: none;
  display: flex;
  align-items: center;
  padding: 0 0 5px 5px;
  box-sizing: border-box;
}

.side-title {
  color: #7c8896;
}

.side-btn {
  width: 13px;
  height: 12px;
  margin-right: 15px;
  margin-top: 2px;
}

.side-btn--float {
  margin: 2px 16px 0 auto;
}

.side-tabs {
  height: 19px;
  flex: none;
  display: flex;
  align-items: stretch;
}

.side-tab {
  padding: 0 7px 2px 8px;
  display: flex;
  align-items: center;
}

.side-tab--on {
  background: #fff;
  border: 1px solid #c4c6c9;
  border-bottom: none;
  border-radius: 2px 2px 0 0;
}

.tree-box {
  width: 513px;
  height: 361px;
  flex: none;
  box-sizing: border-box;
  background: #fff;
  border: 1px solid #b5b8bc;
  border-radius: 2px;
  display: flex;
  overflow: hidden;
}

.tree {
  flex: 1;
  padding-top: 7px;
}

.row {
  position: relative;
  height: 22px;
  display: flex;
  align-items: center;
}

.row-label {
  padding-bottom: 2px;
}

.row--muted .row-label {
  color: #77797c;
}

.lv-0 {
  padding-left: 5px;
}

.lv-1 {
  padding-left: 30px;
}

.lv-2 {
  padding-left: 55px;
}

.lv-3 {
  padding-left: 80px;
}

.exp {
  width: 14px;
  height: 14px;
  box-sizing: border-box;
  flex: none;
  margin-right: 10px;
  position: relative;
}

.exp--on {
  border: 1px solid #a9adb3;
  border-radius: 50%;
  background: #f8f8f8;
}

.exp--on::before {
  content: "";
  position: absolute;
  left: 3px;
  top: 5px;
  width: 6px;
  height: 2px;
  background: #5a6068;
}

.exp--plus::after {
  content: "";
  position: absolute;
  left: 5px;
  top: 3px;
  width: 2px;
  height: 6px;
  background: #5a6068;
}

.ticon {
  width: 18px;
  height: 18px;
  flex: none;
  margin-right: 7px;
}

.guide {
  position: absolute;
  left: 37px;
  top: 0;
  bottom: 0;
  width: 1px;
  background: #d7d9dc;
}

.joint {
  position: absolute;
  top: 0;
  width: 13px;
  height: 11px;
  box-sizing: border-box;
  border-left: 1px solid #d7d9dc;
  border-bottom: 1px solid #d7d9dc;
}

.joint--tee {
  height: 22px;
  border-bottom: none;
}

.joint--tee::after {
  content: "";
  position: absolute;
  left: 0;
  top: 11px;
  width: 13px;
  height: 1px;
  background: #d7d9dc;
}

.joint-lv-2 {
  left: 62px;
}

.joint-lv-3 {
  left: 87px;
}

.vscroll {
  width: 13px;
  flex: none;
  display: flex;
  flex-direction: column;
  align-items: center;
  padding: 21px 3px 4px 0;
  box-sizing: border-box;
}

.vtri {
  width: 8px;
  height: 5px;
  flex: none;
  color: #70767e;
}

.vtri--up {
  transform: rotate(180deg);
}

.vtri--down {
  margin-top: auto;
}

.vthumb {
  width: 6px;
  height: 238px;
  margin-top: 2px;
  background: #aab0b5;
}

/* properties */
.props {
  width: 513px;
  flex: 1;
  min-height: 0;
  box-sizing: border-box;
  margin-top: 5px;
  border: 1px solid #b5b8bc;
  border-radius: 2px;
}

.props-head {
  height: 25px;
  box-sizing: border-box;
  display: grid;
  grid-template-columns: 124px 1fr;
  align-items: center;
  background: #adb2b6;
  border-bottom: 1px solid #80858a;
}

.props-head span {
  padding-left: 11px;
  padding-bottom: 2px;
  box-sizing: border-box;
}

.props-head span + span {
  height: 100%;
  display: flex;
  align-items: center;
  border-left: 1px solid #979ca1;
}

.prop {
  height: 25px;
  display: grid;
  grid-template-columns: 25px 99px 1fr;
  align-items: stretch;
  background: #fff;
}

.prop--group {
  display: flex;
  align-items: center;
  background: #bccfe1;
}

.prop--alt {
  background: #ecedef;
}

.prop-group {
  padding: 0 0 2px 28px;
  color: #6a7a8d;
  font-weight: 500;
}

.prop-gutter {
  position: relative;
}

.prop-gutter::before {
  content: "";
  position: absolute;
  left: 12px;
  top: 0;
  bottom: 0;
  width: 1px;
  background: #dfe1e4;
}

.prop-gutter::after {
  content: "";
  position: absolute;
  left: 12px;
  top: 12px;
  width: 13px;
  height: 1px;
  background: #dfe1e4;
}

.prop--last .prop-gutter::before {
  bottom: 12px;
}

.prop-key,
.prop-val {
  display: flex;
  align-items: center;
  box-sizing: border-box;
  border-bottom: 1px solid #d4d6d8;
  padding-bottom: 1px;
}

.prop-key {
  padding-left: 3px;
  border-right: 1px solid #d4d6d8;
}

.prop-val {
  padding-left: 4px;
  letter-spacing: 0.3px;
}

.bottom-tabs {
  height: 22px;
  flex: none;
  display: flex;
  align-items: flex-end;
  background: #fff;
  padding-left: 7px;
}

.btab {
  height: 20px;
  display: flex;
  align-items: center;
}

.btab--on {
  margin-left: 9px;
  width: 46px;
  box-sizing: border-box;
  justify-content: center;
  background: #a8adb3;
  border: 1px solid #7c8086;
  border-bottom: none;
}

/* viewport */
.view-col {
  flex: 1;
  display: flex;
  flex-direction: column;
  min-width: 0;
}

.toolbar {
  height: 36px;
  flex: none;
  display: grid;
  grid-template-columns: 39px 1px 38px 34px 16px 1px 33px 14px 35px 15px 1px 39px 34px 16px 35px 38px 6px 61px 80px 98px 49px 9px 1px 52px 24px 51px 30px 39px 39px 39px 80px;
  align-items: center;
  justify-items: center;
  background: #fcfcfc;
}

.ti {
  display: block;
}

.ti-camera {
  width: 28px;
  height: 24px;
}

.ti-zoom {
  width: 29px;
  height: 28px;
}

.ti-broom {
  width: 26px;
  height: 28px;
}

.ti-cube {
  width: 26px;
  height: 26px;
}

.ti-ccube {
  width: 27px;
  height: 26px;
}

.ti-fit {
  width: 28px;
  height: 28px;
}

.ti-axes {
  width: 24px;
  height: 26px;
  justify-self: end;
  margin-right: 2px;
}

.ti-rot {
  width: 26px;
  height: 25px;
}

.ti-video {
  width: 28px;
  height: 16px;
}

.ti-first {
  width: 21px;
  height: 20px;
}

.ti-step {
  width: 23px;
  height: 20px;
}

.ti-play {
  width: 18px;
  height: 20px;
}

.ti-export {
  width: 24px;
  height: 24px;
}

.tchev {
  width: 9px;
  height: 6px;
  justify-self: start;
}

.tchev--up {
  transform: rotate(180deg);
}

.tsep {
  width: 1px;
  height: 32px;
  background: #d6d6d6;
}

.tsep--dark {
  height: 36px;
  background: #a6a6a6;
}

.tdots {
  width: 0;
  height: 24px;
  border-left: 1px dotted #777;
}

.tlabel {
  justify-self: start;
  padding-left: 9px;
}

.combo,
.spin {
  height: 24px;
  box-sizing: border-box;
  width: 100%;
  display: flex;
  align-items: center;
  justify-content: space-between;
  padding: 0 6px 0 6px;
  background: #fff;
  border: 1px solid #b4b8bd;
  border-radius: 3px;
  color: #333;
}

.slider {
  width: 83px;
  height: 18px;
  margin-left: -1px;
  display: flex;
  align-items: center;
}

.slider-track {
  flex: 1;
  height: 4px;
  background: #f4f4f4;
  border: 1px solid #c4c4c4;
}

.slider-handle {
  width: 12px;
  height: 16px;
  box-sizing: border-box;
  background: #f6f6f6;
  border: 1px solid #b4b4b4;
}

.spin-arrows {
  display: flex;
  flex-direction: column;
  gap: 3px;
}

.spin-arrows .tchev {
  display: block;
}

.view {
  flex: 1;
  position: relative;
  background: linear-gradient(#b9cde3, #e9ebf0);
  overflow: hidden;
}

.scene {
  position: absolute;
  left: 0;
  top: 0;
}

.triad {
  position: absolute;
  left: 40px;
  top: 692px;
  width: 80px;
  height: 70px;
}

.triad text {
  font-family: "DejaVu Sans", sans-serif;
  font-size: 12px;
  font-weight: 700;
}

.triad-z {
  fill: #1020f0;
}

.triad-x {
  fill: #f01020;
}

.triad-y {
  fill: #10e020;
}

.legend {
  position: absolute;
  left: 1280px;
  top: 433px;
}

.legend-title {
  margin-left: 5px;
  height: 48px;
  line-height: 18px;
  color: #1a1a1a;
  font-size: 16px;
}

.legend-unit {
  margin-left: -2px;
  word-spacing: 2px;
}

.legend-body {
  display: flex;
  margin-left: 21px;
}

.legend-bar {
  width: 15px;
  height: 274px;
  display: flex;
  flex-direction: column;
}

.legend-bar i {
  flex: 1;
}

.legend-ticks {
  display: flex;
  flex-direction: column;
  justify-content: space-between;
  margin: -8px 0 0 2px;
  height: 288px;
  font-family: "DejaVu Sans", sans-serif;
  font-size: 11px;
  line-height: 13px;
  color: #222;
}

.caption {
  position: absolute;
  left: 646px;
  top: 763px;
}

.status {
  height: 33px;
  flex: none;
  box-sizing: border-box;
  border-top: 1px solid #a3a6aa;
  border-bottom: 1px solid #c4c6c9;
  background: #ecedef;
}
</style>
